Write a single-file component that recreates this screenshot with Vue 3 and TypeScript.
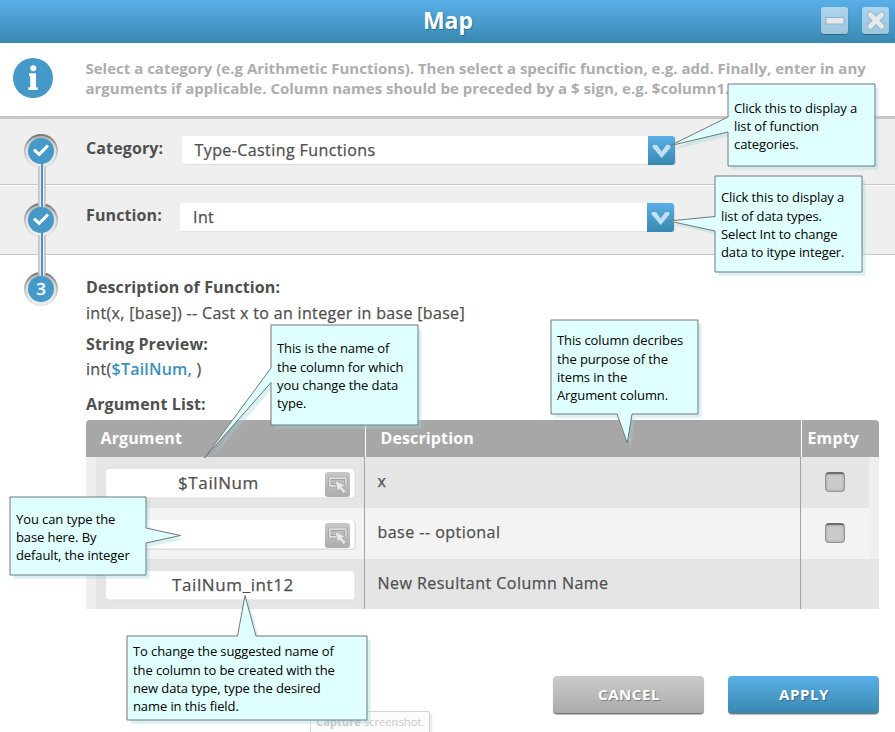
<script setup lang="ts">
interface Callout {
  id: string
  x: number
  y: number
  w: number
  h: number
  top: number
  path: string
  lines: string[]
}

interface ArgumentRow {
  value: string
  description: string
  picker: boolean
  checkbox: boolean
}

const rows: ArgumentRow[] = [
  { value: '$TailNum', description: 'x', picker: true, checkbox: true },
  { value: '', description: 'base -- optional', picker: true, checkbox: true },
  { value: 'TailNum_int12', description: 'New Resultant Column Name', picker: false, checkbox: false },
]

const selects = [
  { label: 'Category:', value: 'Type-Casting Functions', name: 'category' },
  { label: 'Function:', value: 'Int', name: 'function' },
]

const callouts: Callout[] = [
  {
    id: 'category', x: 728, y: 84, w: 147, h: 82, top: 14.5,
    path: 'M728 84H875V166H728V132L670 145.7L728 117Z',
    lines: ['Click this to display a', 'list of function', 'categories.'],
  },
  {
    id: 'function', x: 715, y: 176, w: 147, h: 96, top: 12.3,
    path: 'M715 176H862V272H715V231L669 221L715 216.5Z',
    lines: ['Click this to display a', 'list of data types.', 'Select Int to change', 'data to itype integer.'],
  },
  {
    id: 'name', x: 271, y: 325, w: 147, h: 100, top: 14.3,
    path: 'M271 325H418V425H271V382.5L204.5 458L271 368Z',
    lines: ['This is the name of', 'the column for which', 'you change the data', 'type.'],
  },
  {
    id: 'purpose', x: 551, y: 320, w: 147, h: 94, top: 11.3,
    path: 'M551 320H698V414H632L627.3 443L617 414H551Z',
    lines: ['This column decribes', 'the purpose of the', 'items in the', 'Argument column.'],
  },
  {
    id: 'base', x: 10, y: 497, w: 136, h: 78, top: 12.5,
    path: 'M10 497H146V528L180.5 535.5L146 543V575H10Z',
    lines: ['You can type the', 'base here. By', 'default, the integer'],
  },
  {
    id: 'result', x: 127, y: 636, w: 240, h: 84, top: 6.3,
    path: 'M127 636H237.5L245 595.5L256 636H367V720H127Z',
    lines: ['To change the suggested name of', 'the column to be created with the', 'new data type, type the desired', 'name in this field.'],
  },
]
</script>

<template>
  <main class="dialog">
    <header class="titlebar">
      <h1>Map</h1>
      <div class="window-buttons">
        <button class="win" aria-label="Minimize">
          <svg width="27" height="27" viewBox="0 0 27 27">
            <rect x="5" y="10.5" width="18" height="6.5" fill="#e6e9ea" stroke="#8fb4c9" stroke-width="1" />
          </svg>
        </button>
        <button class="win" aria-label="Close">
          <svg width="27" height="27" viewBox="0 0 27 27">
            <path d="M8.3 7.8L19.7 19.2M19.7 7.8L8.3 19.2" stroke="#8fb4c9" stroke-width="6.6" stroke-linecap="round" />
            <path d="M8.3 7.8L19.7 19.2M19.7 7.8L8.3 19.2" stroke="#e6e9ea" stroke-width="4.8" stroke-linecap="round" />
          </svg>
        </button>
      </div>
    </header>

    <section class="info">
      <svg class="info-icon" width="40" height="40" viewBox="0 0 40 40">
        <circle cx="20" cy="20" r="20" fill="#4599c8" />
        <circle cx="20.3" cy="10.3" r="3" fill="#fff" />
        <path d="M16 15.3H23V29.3H24.8V32H15.3V29.3H17.2V18H16Z" fill="#fff" />
      </svg>
      <p>
        <span>Select a category (e.g Arithmetic Functions). Then select a specific function, e.g. add. Finally, enter in any</span>
        <span>arguments if applicable. Column names should be preceded by a $ sign, e.g. $column1.</span>
      </p>
    </section>

    <section v-for="s in selects" :key="s.name" class="step" :class="s.name">
      <label>{{ s.label }}</label>
      <div class="select">
        <span>{{ s.value }}</span>
        <button class="arrow" aria-label="Open list">
          <svg width="27" height="28" viewBox="0 0 27 28">
            <path d="M4.7 8H9L13.7 14.4L18.4 8H22.5V10.6L13.7 21L4.7 10.6Z" fill="#c3e0f2" />
          </svg>
        </button>
      </div>
    </section>

    <section class="details">
      <h2>Description of Function:</h2>
      <p class="signature">int(x, [base]) -- Cast x to an integer in base [base]</p>
      <h2 class="preview-title">String Preview:</h2>
      <p class="preview">int(<b>$TailNum, </b>)</p>
      <h2 class="list-title">Argument List:</h2>
      <div class="table">
        <div class="row head">
          <div>Argument</div>
          <div>Description</div>
          <div>Empty</div>
        </div>
        <div v-for="(row, i) in rows" :key="i" class="row body">
          <div class="argument">
            <div class="field">
              <span>{{ row.value }}</span>
              <button v-if="row.picker" class="picker" aria-label="Pick column">
                <svg width="25" height="25" viewBox="0 0 25 25">
                  <path d="M11.5 13.8H4.8V6.2H20.8V13.5" fill="none" stroke="#9a9a9a" stroke-width="3" />
                  <path d="M11.5 13.8H4.8V6.2H20.8V13.5" fill="none" stroke="#dedede" stroke-width="1.7" />
                  <path d="M10 8.5L20.5 13.4L17 14.8L21 19.4L18.6 21.4L14.8 16.8L12.8 19.6Z" fill="#e9e9e9" stroke="#a2a2a2" stroke-width="0.6" />
                </svg>
              </button>
            </div>
          </div>
          <div class="description">{{ row.description }}</div>
          <div class="empty" :class="{ inset: row.checkbox }">
            <span v-if="row.checkbox" class="checkbox" />
          </div>
        </div>
      </div>
    </section>

    <footer>
      <button class="action cancel">CANCEL</button>
      <button class="action apply">APPLY</button>
    </footer>

    <svg class="stepper" width="40" height="180" viewBox="21 130 40 180">
      <defs>
        <linearGradient id="ring" x1="0" y1="0" x2="0" y2="1">
          <stop offset="0" stop-color="#757575" />
          <stop offset="0.5" stop-color="#bdbdbd" />
          <stop offset="1" stop-color="#e6e6e6" />
        </linearGradient>
        <linearGradient id="groove" x1="0" y1="0" x2="0" y2="1">
          <stop offset="0" stop-color="#adadad" />
          <stop offset="0.35" stop-color="#dcdcdc" />
          <stop offset="1" stop-color="#eeeeee" />
        </linearGradient>
      </defs>
      <g v-for="cy in [151, 220, 289]" :key="cy">
        <circle cx="41" :cy="cy" r="17" fill="url(#ring)" />
        <circle cx="41" :cy="cy + 0.3" r="15.4" fill="url(#groove)" />
      </g>
      <path d="M42 166V205M42 235V274" stroke="#c6c6c6" stroke-width="8" />
      <path d="M42 164V207M42 233V276" stroke="#e9e9e9" stroke-width="4.6" />
      <path d="M42 160V210M42 230V280" stroke="#4599c8" stroke-width="2" />
      <circle v-for="cy in [151, 220, 289]" :key="cy" cx="41" :cy="cy" r="13" fill="#4599c8" />
      <path d="M34 149.6L39.2 154.4L48 145.5" class="tick" />
      <path d="M34 218.6L39.2 223.4L48 214.5" class="tick" />
      <text x="41" y="294.8" text-anchor="middle">3</text>
    </svg>

    <div class="hint"><b>Capture</b> screenshot.</div>

    <svg class="shapes" width="895" height="732" viewBox="0 0 895 732">
      <g v-for="c in callouts" :key="c.id">
        <path :d="c.path" class="shadow" transform="translate(3.5 3.7)" />
        <path :d="c.path" class="bubble" />
      </g>
    </svg>
    <div
      v-for="c in callouts"
      :key="c.id"
      class="callout"
      :style="{ left: c.x + 'px', top: c.y + 'px', width: c.w + 'px', height: c.h + 'px', paddingTop: c.top + 'px' }"
    >
      <span v-for="line in c.lines" :key="line">{{ line }}</span>
    </div>
  </main>
</template>

<style>
body {
  margin: 0;
  background: #fff;
}
</style>

<style scoped>
* {
  box-sizing: border-box;
}

.dialog {
  position: relative;
  width: 895px;
  height: 732px;
  overflow: hidden;
  background: #fff;
  font-family: 'Open Sans', 'Noto Sans', sans-serif;
  color: #4f4f4f;
}

h1, h2, p {
  margin: 0;
}

button {
  padding: 0;
  border: 0;
  font-family: inherit;
}

svg {
  display: block;
}

.titlebar {
  display: grid;
  grid-template-columns: 1fr auto 1fr;
  height: 43px;
  background: linear-gradient(#5aafe8, #3889b0);
}

.titlebar h1 {
  grid-column: 2;
  padding-left: 1px;
  font-size: 23px;
  line-height: 41px;
  font-weight: 700;
  color: #fff;
  text-shadow: 1px 1px 1px #2f6f92;
}

.window-buttons {
  display: flex;
  justify-content: flex-end;
  gap: 14px;
  padding: 7px 6px 0 0;
}

.win {
  width: 27px;
  height: 27px;
  border-radius: 3px;
  background: linear-gradient(#add5ef, #9dc6da);
  box-shadow: 0 1px 1px #2f6b8a;
}

.info {
  display: flex;
  height: 76px;
  padding: 15px 0 0 13px;
  border-bottom: 3px solid #c5c5c5;
}

.info p {
  padding-left: 32.5px;
  font-size: 15px;
  line-height: 20px;
  font-weight: 700;
  color: #adadad;
  white-space: nowrap;
}

.info p span {
  display: block;
}

.step {
  display: flex;
  background: #efefef;
  border-bottom: 1px solid #c8c8c8;
}

.category {
  height: 66px;
  padding-top: 17px;
}

.function {
  height: 70px;
  padding-top: 17px;
  border-top: 1px solid #fff;
}

.step label {
  width: 96px;
  margin-left: 86px;
  font-size: 16px;
  line-height: 25px;
  font-weight: 700;
  letter-spacing: 0.12px;
  white-space: nowrap;
}

.function label {
  width: 94px;
}

.select {
  display: flex;
  width: 493px;
  height: 28px;
  background: #fff;
  border-radius: 3px;
  box-shadow: 1px 1px 1px #ddd;
  font-size: 16px;
  line-height: 28px;
  letter-spacing: 0.41px;
  -webkit-text-stroke: 0.25px #4f4f4f;
}

.function .select {
  width: 494px;
}

.select span {
  flex: 1;
  padding-left: 12.5px;
}

.function .select span {
  padding-left: 13px;
}

.arrow {
  width: 27px;
  height: 29px;
  border-radius: 0 3px 3px 0;
  background: linear-gradient(#5aafe8, #3889b0);
}

.details {
  padding: 20px 16px 0 86px;
}

h2 {
  font-size: 16px;
  line-height: 24px;
  font-weight: 700;
  letter-spacing: 0.12px;
}

.signature, .preview {
  font-size: 16px;
  line-height: 24px;
  letter-spacing: 0.33px;
  -webkit-text-stroke: 0.25px #4f4f4f;
}

.signature {
  padding-top: 2px;
}

.preview-title {
  margin-top: 7px;
}

.preview {
  padding-top: 1px;
}

.preview b {
  font-weight: 600;
  letter-spacing: 0.2px;
  color: #3b8fb8;
  white-space: pre;
  -webkit-text-stroke: 0;
}

.list-title {
  margin: 11px 0 4px;
}

.row {
  display: grid;
  grid-template-columns: 279px 436px 78px;
}

.head {
  height: 37px;
  border-radius: 4px 4px 0 0;
  background: #a7a7a7;
  color: #fff;
  font-size: 16px;
  line-height: 36px;
  font-weight: 700;
  letter-spacing: 0.12px;
}

.head div {
  padding-left: 14.5px;
}

.head div + div {
  border-left: 1px solid #fff;
}

.head div:last-child {
  padding-left: 5.5px;
}

.body {
  height: 51px;
  background: #e5e5e5;
  border-left: 10px solid #efefef;
  grid-template-columns: 269px 436px 78px;
  font-size: 16px;
  letter-spacing: 0.47px;
  -webkit-text-stroke: 0.25px #4f4f4f;
}

.body:nth-child(3) {
  background-color: #f3f3f3;
}

.body:last-child {
  height: 50px;
}

.argument {
  padding: 12px 0 0 10px;
  border-right: 1px solid #a3a3a3;
}

.field {
  display: flex;
  width: 248px;
  height: 28px;
  border-radius: 3px;
  background: #fff;
  box-shadow: 1px 1px 1px #f0f0f0, 1px 1px 0 1px #dedede;
  font-size: 17px;
  line-height: 27px;
  letter-spacing: 0.6px;
}

.field span {
  flex: 1;
  text-align: center;
  padding-left: 6px;
}

.picker {
  width: 25px;
  height: 25px;
  margin: 3px 4px 0 0;
  border-radius: 3px;
  background: linear-gradient(#c8c8c8, #adadad);
}

.description {
  padding: 12px 0 0 12.5px;
  line-height: 24px;
  border-right: 1px solid #a3a3a3;
}

.empty {
  display: flex;
  padding: 15px 0 0 24px;
}

.inset {
  border-right: 10px solid #efefef;
}

.checkbox {
  width: 20px;
  height: 20px;
  border: 1px solid #969696;
  border-top: 2px solid #6c6c6c;
  border-radius: 4px;
  background: #c9cacb;
  box-shadow: inset 0 0 2px 1px #b0b0b0;
}

footer {
  display: flex;
  justify-content: flex-end;
  gap: 24px;
  padding: 67px 16px 0 0;
}

.action {
  width: 151px;
  height: 38px;
  padding: 0 0 1px 1px;
  border-radius: 4px;
  border-bottom: 1px solid #6f7477;
  color: #fff;
  font-size: 15px;
  line-height: 35px;
  font-weight: 700;
  letter-spacing: 0.55px;
  text-shadow: 1px 1px 1px rgba(60, 60, 60, 0.5);
  box-shadow: 0 1px 1px #bbb;
}

.cancel {
  background: linear-gradient(#cbcbcb, #ababab);
}

.apply {
  background: linear-gradient(#5aafe8, #3889b0);
}

.stepper {
  position: absolute;
  left: 21px;
  top: 130px;
}

.stepper text {
  fill: #f2f8fc;
  font-size: 17px;
  font-weight: 600;
  stroke: #f2f8fc;
  stroke-width: 0.3px;
}

.tick {
  fill: none;
  stroke: #fff;
  stroke-width: 3;
}

.hint {
  position: absolute;
  left: 310px;
  top: 711px;
  width: 120px;
  height: 24px;
  padding-left: 5px;
  border: 1px solid #d4d4d4;
  border-radius: 2px;
  background: #fcfcfc;
  box-shadow: 2px 2px 2px #e8e8e8;
  color: #c9c9c9;
  font-size: 11.2px;
  line-height: 20px;
  white-space: nowrap;
}

.shapes {
  position: absolute;
  left: 0;
  top: 0;
}

.bubble {
  fill: #e0ffff;
  stroke: #707878;
  stroke-width: 1;
  stroke-linejoin: round;
}

.shadow {
  fill: rgba(155, 214, 220, 0.37);
}

.callout {
  position: absolute;
  padding-left: 6px;
  color: #000;
  font-size: 13px;
  line-height: 18.3px;
  letter-spacing: -0.1px;
  white-space: nowrap;
}

.callout span {
  display: block;
}
</style>
